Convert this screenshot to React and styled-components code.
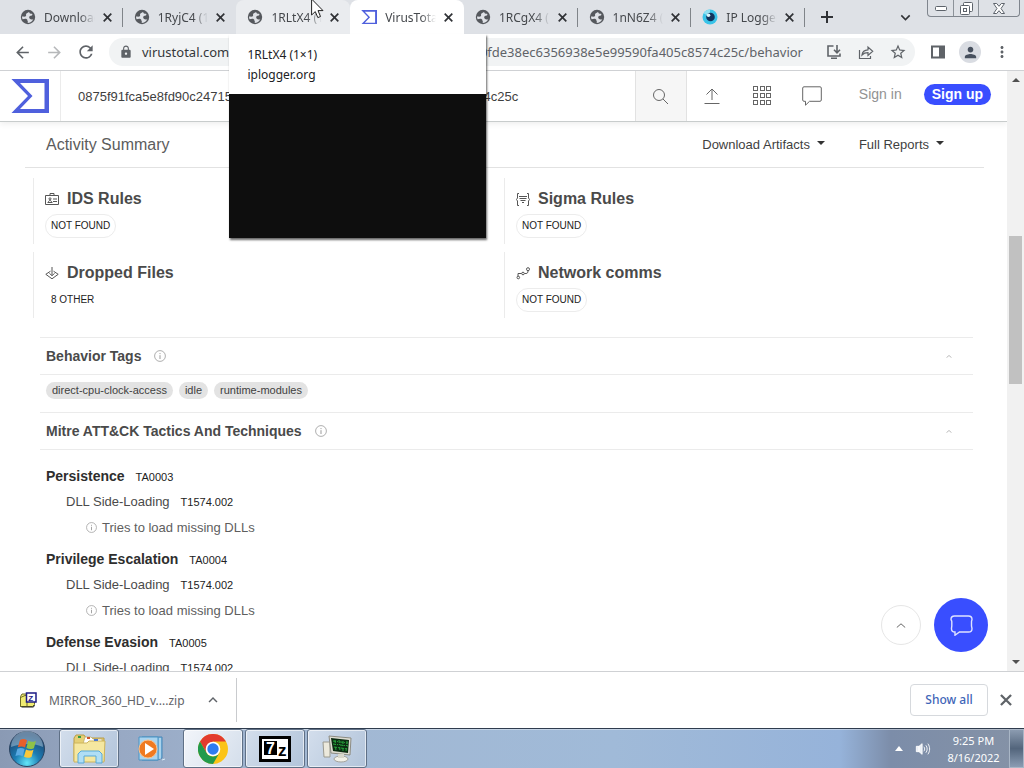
import React from "react";
import styled, { createGlobalStyle, css } from "styled-components";
import {
  MdArrowBack,
  MdArrowForward,
  MdRefresh,
  MdLock,
  MdStarOutline,
  MdPerson,
  MdMoreVert,
  MdKeyboardArrowDown,
  MdKeyboardArrowUp,
} from "react-icons/md";

const FONTS = {
  ui: '"Noto Sans", "Open Sans", sans-serif',
  page: '"Liberation Sans", Arial, sans-serif',
};

const COLORS = {
  strip: "#dee1e6",
  icon: "#5f6368",
  brand: "#394eff",
  line: "#ebebeb",
};

const HASH = "0875f91fca5e8fd90c2471536b90fde38ec6356938e5e99590fa405c8574c25c";

const GlobalStyle = createGlobalStyle`
  * {
    box-sizing: border-box;
  }
  body {
    margin: 0;
    overflow: hidden;
  }
  button, input {
    font: inherit;
    color: inherit;
    border: 0;
    margin: 0;
    padding: 0;
    background: none;
  }
  h2, h3, h4, p, ul {
    margin: 0;
    padding: 0;
    list-style: none;
  }
  a {
    color: inherit;
    text-decoration: none;
  }
  svg {
    display: block;
    flex: none;
  }
`;

const Desktop = styled.div`
  display: flex;
  flex-direction: column;
  height: 100vh;
  position: relative;
  background: #fff;
  font-family: ${FONTS.page};
`;

/* tab strip */
const TabStrip = styled.header`
  display: flex;
  height: 34px;
  padding-left: 9px;
  background: ${COLORS.strip};
  font-family: ${FONTS.ui};
  font-size: 12px;
  color: #45484c;
`;
const TabList = styled.div`
  display: flex;
  flex: 1;
  min-width: 0;
`;
const Tab = styled.div`
  position: relative;
  display: flex;
  align-items: center;
  flex: 1;
  min-width: 0;
  padding: 0 11px;
  ${(p) =>
    p.$line &&
    css`
      &::after {
        content: "";
        position: absolute;
        right: 0;
        top: 8px;
        height: 19px;
        width: 1px;
        background: #808489;
      }
    `}
  ${(p) =>
    p.$state &&
    css`
      border-radius: 8px 8px 0 0;
      background: ${p.$state === "active" ? "#fff" : "#eaecef"};
    `}
`;
const TabButton = styled.button`
  display: flex;
  align-items: center;
  gap: 8px;
  flex: 1;
  min-width: 0;
  height: 100%;
  text-align: left;
`;
const TabTitle = styled.span`
  flex: 1;
  overflow: hidden;
  white-space: nowrap;
  margin-right: 8px;
  mask-image: linear-gradient(90deg, #000 70%, transparent);
`;
const CloseButton = styled.button`
  display: flex;
  color: #303236;
`;
const StripTools = styled.div`
  display: flex;
  align-items: center;
  width: 219px;
  padding-right: 4px;
  color: #303236;
`;
const StripButton = styled.button`
  display: flex;
  justify-content: center;
  width: ${(p) => p.$width};
  margin-left: ${(p) => (p.$end ? "auto" : "0")};
  margin-right: ${(p) => (p.$end ? "10px" : "0")};
`;
const WindowControls = styled.div`
  display: flex;
  align-self: flex-start;
  height: 17px;
  border: 1px solid #7f858d;
  border-top: 0;
  border-radius: 0 0 4px 4px;
  overflow: hidden;
`;
const WindowButton = styled.button`
  display: flex;
  align-items: center;
  justify-content: center;
  width: ${(p) => (p.$wide ? "41px" : "25px")};
  & + & {
    border-left: 1px solid #8c9299;
  }
`;
const HoverCard = styled.div`
  position: absolute;
  z-index: 5;
  top: 100%;
  left: -7px;
  width: 257px;
  background: #fff;
  color: #202124;
  line-height: 20px;
  box-shadow: 1px 2px 2px rgba(0, 0, 0, 0.6);
`;
const HoverText = styled.p`
  padding: 11px 18px 9px;
`;
const HoverPreview = styled.div`
  height: 144px;
  background: #0e0e0e;
`;
const Pointer = styled.svg`
  position: absolute;
  z-index: 6;
  top: 0;
  left: 311px;
`;

/* toolbar */
const Toolbar = styled.nav`
  display: flex;
  align-items: center;
  height: 37px;
  padding: 0 6px;
  border-bottom: 1px solid #cfd1d4;
  background: #fff;
  font-family: ${FONTS.ui};
  font-size: 13px;
  color: ${COLORS.icon};
`;
const ToolButton = styled.button`
  display: flex;
  justify-content: center;
  width: 32px;
  opacity: ${(p) => (p.disabled ? 0.45 : 1)};
`;
const Omnibox = styled.div`
  display: flex;
  align-items: center;
  flex: 1;
  min-width: 0;
  height: 28px;
  margin: 0 7px;
  padding: 0 1px 0 10px;
  border-radius: 14px;
  background: #f1f3f4;
`;
const Host = styled.label`
  margin-left: 9px;
  color: #35373a;
`;
const UrlInput = styled.input`
  flex: 1;
  min-width: 0;
  margin-right: 15px;
  text-align: right;
`;
const Avatar = styled.span`
  display: flex;
  align-items: center;
  justify-content: center;
  width: 22px;
  height: 22px;
  border-radius: 50%;
  background: #d9dce2;
  color: #47505e;
`;

/* page */
const Viewport = styled.div`
  position: relative;
  display: flex;
  flex: 1;
  min-height: 0;
`;
const Page = styled.main`
  flex: 1;
  min-width: 0;
  overflow: hidden;
  color: #3f3f3f;
`;
const SiteHeader = styled.header`
  display: flex;
  align-items: stretch;
  height: 51px;
  border-bottom: 1px solid #c8cccc;
  box-shadow: 0 2px 6px rgba(0, 0, 0, 0.07);
`;
const LogoLink = styled.a`
  display: flex;
  align-items: center;
  width: 61px;
  padding-left: 11px;
  border-right: 1px solid ${COLORS.line};
`;
const SearchInput = styled.input`
  flex: 1;
  min-width: 0;
  padding-left: 17px;
  font-size: 13px;
`;
const SearchButton = styled.button`
  display: flex;
  align-items: center;
  justify-content: center;
  width: 52px;
  border: solid #e2e2e2;
  border-width: 0 1px;
  background: #f6f6f6;
  color: #666;
`;
const HeaderButton = styled.button`
  display: flex;
  align-items: center;
  justify-content: center;
  width: 50px;
  color: #666;
`;
const SignIn = styled.a`
  align-self: center;
  padding: 0 22px 4px;
  font-size: 14px;
  color: #929292;
`;
const SignUp = styled.a`
  align-self: center;
  margin: 0 16px 4px 0;
  padding: 0 8px;
  border-radius: 11px;
  background: ${COLORS.brand};
  color: #fff;
  font-size: 14px;
  font-weight: bold;
  line-height: 21px;
`;
const SummaryBar = styled.div`
  display: flex;
  align-items: center;
  height: 46px;
  margin: 0 23px 0 25px;
  padding: 0 40px 0 21px;
  border-bottom: 1px solid #e2e2e2;
`;
const SummaryTitle = styled.h2`
  margin-right: auto;
  font-size: 16px;
  font-weight: normal;
  color: #5c5c5c;
`;
const MenuButton = styled.button`
  display: flex;
  align-items: center;
  gap: 7px;
  margin-left: 34px;
  font-size: 13px;
`;
const Caret = styled.span`
  margin-bottom: 3px;
  border: 4px solid transparent;
  border-top-color: #333;
  border-bottom: 0;
`;
const CardGrid = styled.div`
  display: grid;
  grid-template-columns: 1fr 1fr;
  gap: 8px 0;
  padding: 10px 32px 19px 33px;
`;
const Card = styled.section`
  height: 66px;
  padding: 11px 0 0 11px;
  border-left: 1px solid ${COLORS.line};
`;
const CardTitle = styled.h3`
  display: flex;
  align-items: center;
  gap: 8px;
  font-size: 16px;
  line-height: 20px;
  color: #4a4a4a;
`;
const Pill = styled.span`
  display: inline-block;
  margin-top: 5px;
  padding: 0 5px;
  border: 1px solid ${(p) => (p.$plain ? "transparent" : "#ececec")};
  border-radius: 12px;
  color: #222;
  font-size: 10px;
  line-height: 22px;
`;
const Section = styled.section`
  margin: 0 34px 0 40px;
`;
const SectionHeader = styled.button`
  display: flex;
  align-items: center;
  width: 100%;
  height: 38px;
  padding: 0 21px 0 6px;
  border: solid ${COLORS.line};
  border-width: 1px 0;
  font-size: 14px;
  font-weight: bold;
  color: #4a4a4a;
  svg:first-of-type {
    margin-left: 13px;
  }
  svg:last-of-type {
    margin-left: auto;
    color: #8c8c8c;
  }
`;
const Tags = styled.ul`
  display: flex;
  gap: 6px;
  height: 37px;
  padding: 7px 6px 0;
`;
const Tag = styled.li`
  height: 17px;
  padding: 0 6px;
  border-radius: 9px;
  background: #e3e3e3;
  font-size: 11px;
  line-height: 17px;
`;
const TacticList = styled.ul`
  padding: 14px 6px 0;
`;
const Tactic = styled.li`
  margin-bottom: 7px;
`;
const TreeRow = styled.div`
  display: flex;
  align-items: center;
  height: ${(p) => (p.$depth ? "26px" : "24px")};
  padding-left: ${(p) => p.$depth * 20}px;
  font-size: 13px;
  color: ${(p) => (p.$depth === 2 ? "#5e5e5e" : "#4a4a4a")};
`;
const TacticName = styled.h4`
  font-size: 14px;
  color: #2e2e2e;
`;
const Code = styled.a`
  margin: 2px 0 0 11px;
  font-size: 11px;
  color: #222;
`;
const Note = styled.span`
  margin-left: 5px;
`;
const Floating = styled.div`
  position: absolute;
  right: 36px;
  bottom: 19px;
  display: flex;
  align-items: center;
  gap: 13px;
`;
const RoundButton = styled.button`
  display: flex;
  align-items: center;
  justify-content: center;
  width: ${(p) => (p.$primary ? "54px" : "40px")};
  height: ${(p) => (p.$primary ? "54px" : "40px")};
  border: ${(p) => (p.$primary ? "0" : "1px solid #e6e6e6")};
  border-radius: 50%;
  background: ${(p) => (p.$primary ? COLORS.brand : "#fff")};
  color: ${(p) => (p.$primary ? "#fff" : "#666")};
`;
const Scrollbar = styled.div`
  display: flex;
  flex-direction: column;
  align-items: center;
  width: 17px;
  background: #f1f1f1;
`;
const ScrollArrow = styled.span`
  margin: 7px 0;
  border: 4px solid transparent;
  ${(p) =>
    p.$up
      ? "border-bottom-color: #505050; border-top: 0;"
      : "border-top-color: #505050; border-bottom: 0;"}
`;
const Track = styled.div`
  flex: ${(p) => p.$part};
  width: 13px;
  background: ${(p) => (p.$thumb ? "#c1c1c1" : "none")};
`;

/* downloads */
const DownloadBar = styled.aside`
  display: flex;
  align-items: center;
  height: 57px;
  padding-right: 12px;
  border-top: 1px solid #cfd1d4;
  font-family: ${FONTS.ui};
  font-size: 12px;
  color: ${COLORS.icon};
`;
const DownloadItem = styled.div`
  display: flex;
  align-items: center;
  gap: 12px;
  width: 237px;
  height: 44px;
  padding: 0 14px 0 20px;
  border-right: 1px solid #c9cbce;
`;
const DownloadName = styled.button`
  flex: 1;
  text-align: left;
`;
const ShowAll = styled.button`
  height: 32px;
  width: 78px;
  margin: 0 12px 0 auto;
  padding-bottom: 2px;
  border: 1px solid #d6d9dd;
  border-radius: 4px;
  color: #3f66b8;
  font-weight: 500;
`;
const IconButton = styled.button`
  display: flex;
`;

/* taskbar */
const Taskbar = styled.footer`
  display: flex;
  align-items: stretch;
  gap: 2px;
  height: 40px;
  border-top: 1px solid #2f3c4e;
  background: linear-gradient(
    90deg,
    #8a9ab4 0%,
    #98a9c4 12%,
    #a2b8d3 30%,
    #a0bad8 60%,
    #96b3da 82%,
    #7c8da9 87%,
    #8592a6 100%
  );
  box-shadow: inset 0 1px 0 rgba(255, 255, 255, 0.4);
`;
const StartButton = styled.button`
  display: flex;
  align-items: center;
  justify-content: center;
  width: 57px;
  padding-right: 3px;
`;
const TaskButton = styled.button`
  display: flex;
  align-items: center;
  justify-content: center;
  width: 60px;
  ${(p) =>
    p.$open &&
    css`
      border: 1px solid #5f7086;
      border-radius: 3px;
      background: ${p.$open === "front"
        ? "linear-gradient(120deg, #f2f5fa, #d4deeb)"
        : "linear-gradient(120deg, #d3deec, #b2c4da)"};
      box-shadow: inset 0 0 0 1px rgba(255, 255, 255, 0.6);
    `}
`;
const Tray = styled.div`
  display: flex;
  align-items: center;
  margin-left: auto;
`;
const TrayButton = styled.button`
  display: flex;
  align-items: center;
  justify-content: center;
  width: 24px;
`;
const Clock = styled.time`
  width: 74px;
  padding-left: 3px;
  text-align: center;
  font-family: ${FONTS.ui};
  font-size: 11px;
  line-height: 17px;
  color: #fff;
`;
const PeekButton = styled.button`
  align-self: stretch;
  width: 15px;
  border: 1px solid #a9b6c6;
  background: linear-gradient(#8b9bb0, #53657c 50%, #8a9cb3);
`;

const Cross = ({ size = 9 }) => (
  <svg width={size} height={size} viewBox="0 0 9 9" stroke="currentColor" strokeWidth="1.7">
    <path d="m.7.7 7.6 7.6M8.3.7.7 8.3" />
  </svg>
);

const Plus = () => (
  <svg width="12" height="12" viewBox="0 0 12 12" stroke="currentColor" strokeWidth="2">
    <path d="M6 0v12M0 6h12" />
  </svg>
);

const Globe = () => (
  <svg width="16" height="16" viewBox="0 0 16 16">
    <circle cx="8" cy="8" r="7.2" fill="#55585d" />
    <path
      d="M9 3c-1 .9-2.600 1-2.900 2-.3 1 .4 1.500-.3 2.200-.7.700-2 .4-3.800.4 0 1 .2 1.900.6 2.700 1.500-.5 3-.9 4.200-.1 1 .7.3 1.500.9 2.100.4.5.2 1-.2 1.600 2.600 0 4.800-1.500 5.800-3.700-1.200.6-2.700.5-3.500-.4-.8-1-.9-2 .2-2.700.7-.5 1.600-.2 2.100-.8.3-.4.300-.9.200-1.400-.7-.2-1.500.1-2.200-.3C9.400 4.200 9.500 3.500 9 3z"
      fill="#dee1e6"
    />
  </svg>
);

const Sigma = ({ size }) => (
  <svg width={size} height={size * 0.9} viewBox="0 0 38 34">
    <path
      d="M.4 0H38v34H.4L17 17zM9 4l12.5 13L9 30h24.5V4z"
      fill="#4f60dd"
      fillRule="evenodd"
    />
  </svg>
);

const IpLogo = () => (
  <svg width="16" height="16" viewBox="0 0 16 16">
    <circle cx="8" cy="8" r="7.5" fill="#39c3e8" />
    <path d="M8 .5A7.5 7.5 0 0 0 1.5 4.2L8 8z" fill="#8fe0f2" />
    <circle cx="8.5" cy="8" r="4.3" fill="#12335c" />
    <circle cx="6.5" cy="6.3" r="1.8" fill="#d8f5fb" />
  </svg>
);

const Info = ({ size }) => (
  <svg width={size} height={size} viewBox="0 0 12 12" fill="none" stroke="#9b9b9b">
    <circle cx="6" cy="6" r="5.4" strokeWidth="0.8" />
    <path d="M6 5.2V9M6 3.1v1" strokeWidth="1" />
  </svg>
);

const Chevron = ({ size = 10 }) => (
  <svg width={size} height={size / 2} viewBox="0 0 10 5" fill="none" stroke="currentColor">
    <path d="M.8 4.5 5 .8l4.2 3.7" />
  </svg>
);

const InstallIcon = () => (
  <svg width="16" height="16" viewBox="0 0 16 16" fill="none" stroke="currentColor" strokeWidth="1.6">
    <path d="M7.5 2H2v10h12V9.5M5 14.2h6M11 1v7.5M8 5.8l3 3 3-3" />
  </svg>
);

const ShareIcon = () => (
  <svg width="16" height="16" viewBox="0 0 16 16" fill="none" stroke="currentColor" strokeWidth="1.2">
    <path d="M1.5 6v8.5h11V12M4 11c.4-3.5 2.6-5 6-5.2V3l4.7 4.3-4.7 4.2V8.7C7.5 8.7 5.6 9.3 4 11z" />
  </svg>
);

const PanelIcon = () => (
  <svg width="16" height="16" viewBox="0 0 16 16">
    <path d="M1 1.5h14v13H1zM3 3.5v9h6v-9z" fill="currentColor" fillRule="evenodd" />
  </svg>
);

const SearchIcon = () => (
  <svg width="17" height="17" viewBox="0 0 17 17" fill="none" stroke="currentColor">
    <circle cx="7" cy="7" r="5.5" />
    <path d="m11 11 5 5" />
  </svg>
);

const UploadIcon = () => (
  <svg width="16" height="18" viewBox="0 0 16 18" fill="none" stroke="currentColor">
    <path d="M8 13V2M2.5 7.5 8 2l5.5 5.5M.5 16.5h15" />
  </svg>
);

const AppsIcon = () => (
  <svg width="18" height="20" viewBox="0 0 18 20" fill="none" stroke="currentColor">
    {[0.5, 7.5, 14.5].map((y) =>
      [0.5, 7.5, 13.5].map((x) => <rect key={`${x}-${y}`} x={x} y={y} width="4" height="4" />)
    )}
  </svg>
);

const ChatIcon = () => (
  <svg width="20" height="20" viewBox="0 0 20 20" fill="none" stroke="currentColor">
    <path d="M2 .8h16c.8 0 1.3.5 1.3 1.2v12c0 .8-.5 1.3-1.3 1.3H7.5l-4 3.9v-3.9H2c-.8 0-1.3-.5-1.3-1.3V2C.7 1.3 1.2.8 2 .8z" />
  </svg>
);

const FabChatIcon = () => (
  <svg width="23" height="21" viewBox="0 0 23 21" fill="none" stroke="#dfe3ff" strokeWidth="1.4">
    <path d="M4.5 1h14C20.5 1 22 2.3 22 4.2c0 1-.5 1.5-.5 2.5v4c0 1.2.5 1.8.5 3 0 2-1.5 3.3-3.5 3.3H9.5L5 20.2V17c-2.5 0-3.5-1.3-3.5-3.3 0-1.2.3-1.8.3-3v-4C1.8 5.7 1 5.2 1 4.2 1 2.3 2.5 1 4.5 1z" />
  </svg>
);

const BadgeIcon = () => (
  <svg width="14" height="12" viewBox="0 0 14 12" fill="none" stroke="#555">
    <path d="M.5 2.5h13v9H.5zM5 2.5V.5h4v2M2.5 9.5h5M3.5 9c0-2 3-2 3 0M8 6h4M8 8.5h4" />
    <circle cx="5" cy="5.8" r="1" />
  </svg>
);

const BracesIcon = () => (
  <svg width="14" height="13" viewBox="0 0 14 13" fill="none" stroke="#555">
    <path d="M3 .5H1.5V5l-1 1.5 1 1.5v4.5H3M11 .5h1.5V5l1 1.5-1 1.5v4.5H11M3 3.5h8M3.5 5.5h7M4.5 7.5h5M6 9.5h2" />
  </svg>
);

const DropIcon = () => (
  <svg width="14" height="13" viewBox="0 0 14 13" fill="none" stroke="#555">
    <path d="M5.5 4.2.8 7.3 7 11.8l6.2-4.5-4.7-3.1M7 0v8.5M4.5 6.3 7 8.8l2.5-2.5" />
  </svg>
);

const RouteIcon = () => (
  <svg width="14" height="13" viewBox="0 0 14 13" fill="none" stroke="#555">
    <path d="M2 9.5v-3h3.5M8.5 6.5H10c1.5 0 2-1 2-2.5" />
    <circle cx="2.3" cy="10.5" r="1.3" />
    <circle cx="7" cy="6.5" r="1.3" />
    <circle cx="12" cy="2.2" r="1.5" />
  </svg>
);

const ZipIcon = () => (
  <svg width="17" height="16" viewBox="0 0 17 16">
    <path d="M.5 4.5 2 2h4l1 1.5v11H.5zM5 3.5h9.500v9l-2 2H.5v-9z" fill="#f0ec72" stroke="#6d6b28" />
    <path d="M1.5 15h12l1-2" fill="none" stroke="#222" />
    <rect x="6.5" y="1" width="9.5" height="9" fill="#fff" stroke="#1d1b85" strokeWidth="1.5" />
    <text x="8.3" y="8.5" fontFamily="Liberation Sans" fontWeight="bold" fontSize="8" fill="#1d1b85">Z</text>
  </svg>
);

const Orb = () => (
  <svg width="38" height="38" viewBox="0 0 38 38">
    <defs>
      <radialGradient id="orb" cx="50%" cy="90%" r="80%">
        <stop offset="0" stopColor="#62e6f8" />
        <stop offset=".45" stopColor="#1c7db4" />
        <stop offset="1" stopColor="#1e4470" />
      </radialGradient>
    </defs>
    <circle cx="19" cy="19" r="17.5" fill="url(#orb)" stroke="#2a4360" />
    <path d="M3 17a16 16 0 0 1 32 0c-8-4-22-4-32 0z" fill="#c4d9e6" opacity=".45" />
    <path d="M12 10c2.5-1.5 4.8-1.2 7 .2l-2 7.3c-2.3-1.3-4.5-1.5-7.2-.2z" fill="#e9602b" />
    <path d="M20.3 10.8c2.3 1.3 4.7 1.3 7.6.1l-2 7.3c-2.8 1.2-5 1.1-7.5-.1z" fill="#8fc248" />
    <path d="M9.4 18.8c2.6-1.3 4.9-1 7.2.2l-2 7.2c-2.4-1.3-4.5-1.4-7.2-.2z" fill="#5aa9e2" />
    <path d="M18 19.6c2.4 1.3 4.7 1.3 7.5.1l-2 7.2c-2.7 1.2-5 1.1-7.5-.1z" fill="#fbc83a" />
  </svg>
);

const FolderIcon = () => (
  <svg width="34" height="30" viewBox="0 0 34 30">
    <path d="M2 4 4 1h8l2 3h18v23H2z" fill="#e5cf76" stroke="#b89c48" />
    <path d="M13 3h6l2 2h9v5H11z" fill="#fff" stroke="#bba55b" strokeWidth=".7" />
    <path d="M2 9h13l2-2h16l-1 21H2z" fill="#f5e7a0" stroke="#cdb45c" />
    <path d="M6 2h3v2H6z" fill="#2f9946" />
    <path d="M15 3h3v2h-3z" fill="#cf542c" />
    <path d="M22 5h4v2h-4z" fill="#4b77cf" />
    <path d="M6 29v-9l3-3h18l3 3v9h-6v-7H12v7z" fill="#b0def6" stroke="#58a9d8" />
  </svg>
);

const MediaIcon = () => (
  <svg width="30" height="26" viewBox="0 0 30 26">
    <path d="M6 1h20v21l-4 2H6z" fill="#7db8df" stroke="#4787b8" />
    <path d="M3 1h19v23H3z" fill="#a9d4ef" stroke="#4b94c4" />
    <path d="M24 2v21M26 24l3-1" stroke="#d7eefa" />
    <circle cx="12" cy="13" r="9" fill="#ef7a21" stroke="#f9c28e" />
    <path d="m9 7 9 6-9 6z" fill="#fff" />
  </svg>
);

const ChromeIcon = () => (
  <svg width="30" height="30" viewBox="0 0 30 30">
    <circle cx="15" cy="15" r="15" fill="#fbc417" />
    <path d="M2 7.5A15 15 0 0 1 28 7.5H15L8.5 18.8z" fill="#e33b2e" />
    <path d="M2 7.5A15 15 0 0 0 15 30l6.5-11.2a7.5 7.5 0 0 1-13 0z" fill="#229a4c" />
    <circle cx="15" cy="15" r="7.3" fill="#fff" />
    <circle cx="15" cy="15" r="5.7" fill="#2f7cf0" />
  </svg>
);

const SevenZipIcon = () => (
  <svg width="32" height="26" viewBox="0 0 32 26" fontFamily="Liberation Sans" fontWeight="bold">
    <rect x="1.5" y="1.5" width="29" height="23" fill="#fff" stroke="#000" strokeWidth="3" />
    <path d="M5 5h13v14H5z" fill="#000" />
    <text x="7" y="18" fontSize="16" fill="#fff">7</text>
    <text x="19" y="20" fontSize="17" fill="#000">z</text>
  </svg>
);

const MonitorIcon = () => (
  <svg width="32" height="28" viewBox="0 0 32 28">
    <path d="M2 7h7v15H3z" fill="#ece9dc" stroke="#9b9a90" />
    <path d="m8 1 22 2-1 17-19-2z" fill="#deddd2" stroke="#8d8c83" />
    <path d="m10 3 18 2-1 13-15-2z" fill="#0c2c12" />
    <path
      d="m12 6 15 2M12 9l15 2M13 12l14 2M14 5l1 11M18 5l1 11M22 6v11M26 6l-1 11"
      stroke="#27a63c"
      strokeDasharray="3 1 1 2"
    />
    <ellipse cx="20" cy="24" rx="7" ry="3" fill="#f2f1e8" stroke="#a5a49b" />
    <path d="M17 19h6v4h-6z" fill="#d9d8cd" />
  </svg>
);

const SpeakerIcon = () => (
  <svg width="16" height="16" viewBox="0 0 18 16" fill="none" stroke="#fff">
    <path d="M1.5 5h3v6h-3zM4.5 5 8 2v12l-3.5-3z" fill="#e9eef5" />
    <path d="M10 5.5c1.2 1.5 1.2 3.5 0 5M12.2 3.8c2 2.5 2 6 0 8.4M14.5 2c2.6 3.6 2.6 8.5 0 12" />
  </svg>
);

const TABS = [
  { title: "Downloads", icon: <Globe />, line: true },
  { title: "1RyjC4 (1×1)", icon: <Globe /> },
  { title: "1RLtX4 (1×1)", icon: <Globe />, state: "hover" },
  { title: "VirusTotal", icon: <Sigma size={16} />, state: "active" },
  { title: "1RCgX4 (1×1)", icon: <Globe />, line: true },
  { title: "1nN6Z4 (1×1)", icon: <Globe />, line: true },
  { title: "IP Logger", icon: <IpLogo />, line: true },
];

const CARDS = [
  { title: "IDS Rules", icon: <BadgeIcon />, result: "NOT FOUND" },
  { title: "Sigma Rules", icon: <BracesIcon />, result: "NOT FOUND" },
  { title: "Dropped Files", icon: <DropIcon />, result: "8 OTHER", plain: true },
  { title: "Network comms", icon: <RouteIcon />, result: "NOT FOUND" },
];

const TACTICS = [
  { name: "Persistence", code: "TA0003", note: "Tries to load missing DLLs" },
  { name: "Privilege Escalation", code: "TA0004", note: "Tries to load missing DLLs" },
  { name: "Defense Evasion", code: "TA0005" },
];

const BrowserTabs = () => (
  <TabStrip>
    <TabList>
      {TABS.map((tab) => (
        <Tab key={tab.title} $state={tab.state} $line={tab.line}>
          <TabButton>
            {tab.icon}
            <TabTitle>{tab.title}</TabTitle>
          </TabButton>
          <CloseButton aria-label={`Close ${tab.title}`}>
            <Cross />
          </CloseButton>
          {tab.state === "hover" && (
            <HoverCard>
              <HoverText>
                1RLtX4 (1×1)
                <br />
                iplogger.org
              </HoverText>
              <HoverPreview />
            </HoverCard>
          )}
        </Tab>
      ))}
    </TabList>
    <StripTools>
      <StripButton $width="44px" aria-label="New tab">
        <Plus />
      </StripButton>
      <StripButton $width="24px" $end aria-label="Search tabs">
        <MdKeyboardArrowDown size={19} />
      </StripButton>
      <WindowControls>
        <WindowButton aria-label="Minimize">
          <svg width="12" height="5" viewBox="0 0 12 5">
            <rect x=".5" y=".5" width="11" height="4" rx="1" fill="#fff" stroke="#5d636b" />
          </svg>
        </WindowButton>
        <WindowButton aria-label="Restore">
          <svg width="13" height="13" viewBox="0 0 13 13" fill="#fff" stroke="#5d636b">
            <rect x="3.5" y=".5" width="9" height="9" rx="1" />
            <rect x=".5" y="3.5" width="9" height="9" rx="1" />
            <rect x="3.5" y="6.5" width="3" height="3" />
          </svg>
        </WindowButton>
        <WindowButton $wide aria-label="Close window">
          <svg width="12" height="11" viewBox="0 0 12 11" fill="#fff" stroke="#5d636b">
            <path d="M.5.5h3.2L6 3.3 8.3.5h3.2L8 5.5l3.5 5H8.3L6 7.7l-2.3 2.8H.5L4 5.5z" />
          </svg>
        </WindowButton>
      </WindowControls>
    </StripTools>
  </TabStrip>
);

const AddressBar = () => (
  <Toolbar>
    <ToolButton aria-label="Back">
      <MdArrowBack size={19} />
    </ToolButton>
    <ToolButton aria-label="Forward" disabled>
      <MdArrowForward size={19} />
    </ToolButton>
    <ToolButton aria-label="Reload">
      <MdRefresh size={20} />
    </ToolButton>
    <Omnibox>
      <MdLock size={14} />
      <Host htmlFor="url">virustotal.com</Host>
      <UrlInput id="url" defaultValue={`/gui/file/${HASH}/behavior`} />
      <ToolButton aria-label="Install">
        <InstallIcon />
      </ToolButton>
      <ToolButton aria-label="Share">
        <ShareIcon />
      </ToolButton>
      <ToolButton aria-label="Bookmark">
        <MdStarOutline size={18} />
      </ToolButton>
    </Omnibox>
    <ToolButton aria-label="Side panel">
      <PanelIcon />
    </ToolButton>
    <ToolButton aria-label="Profile">
      <Avatar>
        <MdPerson size={17} />
      </Avatar>
    </ToolButton>
    <ToolButton aria-label="Menu">
      <MdMoreVert size={18} />
    </ToolButton>
  </Toolbar>
);

const ReportHeader = () => (
  <SiteHeader>
    <LogoLink href="#" aria-label="VirusTotal">
      <Sigma size={38} />
    </LogoLink>
    <SearchInput aria-label="Search" defaultValue={HASH} />
    <SearchButton aria-label="Search">
      <SearchIcon />
    </SearchButton>
    <HeaderButton aria-label="Upload">
      <UploadIcon />
    </HeaderButton>
    <HeaderButton aria-label="Apps">
      <AppsIcon />
    </HeaderButton>
    <HeaderButton aria-label="Comments">
      <ChatIcon />
    </HeaderButton>
    <SignIn href="#">Sign in</SignIn>
    <SignUp href="#">Sign up</SignUp>
  </SiteHeader>
);

const Report = () => (
  <Page>
    <ReportHeader />
    <SummaryBar>
      <SummaryTitle>Activity Summary</SummaryTitle>
      <MenuButton>
        Download Artifacts <Caret />
      </MenuButton>
      <MenuButton>
        Full Reports <Caret />
      </MenuButton>
    </SummaryBar>
    <CardGrid>
      {CARDS.map((card) => (
        <Card key={card.title}>
          <CardTitle>
            {card.icon}
            {card.title}
          </CardTitle>
          <Pill $plain={card.plain}>{card.result}</Pill>
        </Card>
      ))}
    </CardGrid>
    <Section>
      <SectionHeader>
        Behavior Tags
        <Info size={12} />
        <Chevron size={6} />
      </SectionHeader>
      <Tags>
        <Tag>direct-cpu-clock-access</Tag>
        <Tag>idle</Tag>
        <Tag>runtime-modules</Tag>
      </Tags>
    </Section>
    <Section>
      <SectionHeader>
        Mitre ATT&amp;CK Tactics And Techniques
        <Info size={12} />
        <Chevron size={6} />
      </SectionHeader>
      <TacticList>
        {TACTICS.map((tactic) => (
          <Tactic key={tactic.code}>
            <TreeRow $depth={0}>
              <TacticName>{tactic.name}</TacticName>
              <Code href="#">{tactic.code}</Code>
            </TreeRow>
            <TreeRow $depth={1}>
              DLL Side-Loading
              <Code href="#">T1574.002</Code>
            </TreeRow>
            {tactic.note && (
              <TreeRow $depth={2}>
                <Info size={11} />
                <Note>{tactic.note}</Note>
              </TreeRow>
            )}
          </Tactic>
        ))}
      </TacticList>
    </Section>
  </Page>
);

const App = () => {
  return (
    <Desktop>
      <GlobalStyle />
      <BrowserTabs />
      <AddressBar />
      <Viewport>
        <Report />
        <Scrollbar>
          <ScrollArrow $up />
          <Track $part={147} />
          <Track $part={148} $thumb />
          <Track $part={269} />
          <ScrollArrow />
        </Scrollbar>
        <Floating>
          <RoundButton aria-label="Back to top">
            <Chevron />
          </RoundButton>
          <RoundButton $primary aria-label="Chat">
            <FabChatIcon />
          </RoundButton>
        </Floating>
      </Viewport>
      <DownloadBar>
        <DownloadItem>
          <ZipIcon />
          <DownloadName>MIRROR_360_HD_v....zip</DownloadName>
          <IconButton aria-label="Download options">
            <MdKeyboardArrowUp size={18} />
          </IconButton>
        </DownloadItem>
        <ShowAll>Show all</ShowAll>
        <IconButton aria-label="Close downloads">
          <Cross size={12} />
        </IconButton>
      </DownloadBar>
      <Taskbar>
        <StartButton aria-label="Start">
          <Orb />
        </StartButton>
        <TaskButton $open="back" aria-label="Explorer">
          <FolderIcon />
        </TaskButton>
        <TaskButton aria-label="Media Player">
          <MediaIcon />
        </TaskButton>
        <TaskButton $open="front" aria-label="Chrome">
          <ChromeIcon />
        </TaskButton>
        <TaskButton $open="back" aria-label="7-Zip">
          <SevenZipIcon />
        </TaskButton>
        <TaskButton $open="back" aria-label="System monitor">
          <MonitorIcon />
        </TaskButton>
        <Tray>
          <TrayButton aria-label="Show hidden icons">
            <svg width="8" height="5" viewBox="0 0 8 5">
              <path d="m4 0 4 5H0z" fill="#fff" />
            </svg>
          </TrayButton>
          <TrayButton aria-label="Volume">
            <SpeakerIcon />
          </TrayButton>
          <Clock>
            9:25 PM
            <br />
            8/16/2022
          </Clock>
          <PeekButton aria-label="Show desktop" />
        </Tray>
      </Taskbar>
      <Pointer width="13" height="19" viewBox="0 0 13 19">
        <path d="M.6-1v16l3.7-3.4 2.5 6 2.7-1.1L7 10.600h5z" fill="#fff" stroke="#222" />
      </Pointer>
    </Desktop>
  );
};

export default App;
